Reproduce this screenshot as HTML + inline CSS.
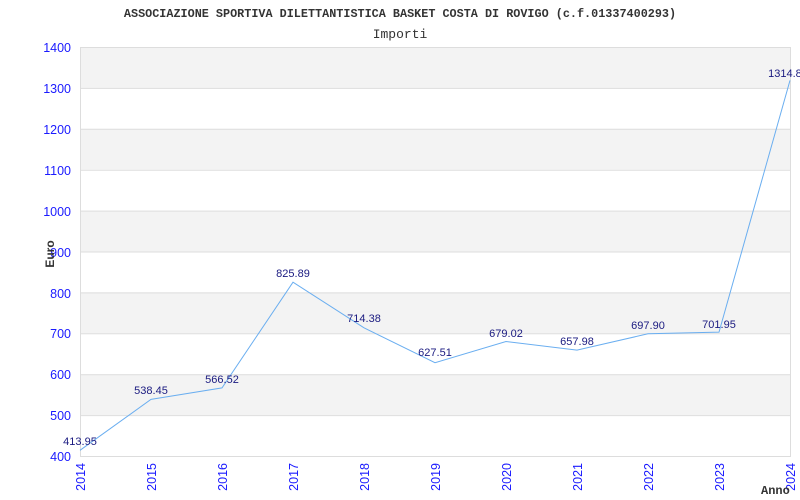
<!DOCTYPE html>
<html><head><meta charset="utf-8"><style>html,body{margin:0;padding:0;background:#fff}svg{display:block}</style></head><body>
<svg width="800" height="500" xmlns="http://www.w3.org/2000/svg">
<rect width="800" height="500" fill="#fff"/>
<text x="400" y="17" text-anchor="middle" font-family="Liberation Mono, monospace" font-weight="bold" font-size="11.8" fill="#333">ASSOCIAZIONE SPORTIVA DILETTANTISTICA BASKET COSTA DI ROVIGO (c.f.01337400293)</text>
<text x="400" y="38" text-anchor="middle" font-family="Liberation Mono, monospace" font-size="13" fill="#333">Importi</text>
<g fill="#f3f3f3">
<rect x="80" y="47" width="710" height="40.9"/>
<rect x="80" y="128.8" width="710" height="40.9"/>
<rect x="80" y="210.6" width="710" height="40.9"/>
<rect x="80" y="292.4" width="710" height="40.9"/>
<rect x="80" y="374.2" width="710" height="40.9"/>
</g>
<g stroke="#ddd" stroke-width="1">
<line x1="80" y1="47.5" x2="790" y2="47.5"/>
<line x1="80" y1="88.4" x2="790" y2="88.4"/>
<line x1="80" y1="129.3" x2="790" y2="129.3"/>
<line x1="80" y1="170.2" x2="790" y2="170.2"/>
<line x1="80" y1="211.1" x2="790" y2="211.1"/>
<line x1="80" y1="252" x2="790" y2="252"/>
<line x1="80" y1="292.9" x2="790" y2="292.9"/>
<line x1="80" y1="333.8" x2="790" y2="333.8"/>
<line x1="80" y1="374.7" x2="790" y2="374.7"/>
<line x1="80" y1="415.6" x2="790" y2="415.6"/>
<line x1="80" y1="456.5" x2="790" y2="456.5"/>
<line x1="80.5" y1="47" x2="80.5" y2="457"/>
<line x1="790.5" y1="47" x2="790.5" y2="457"/>
</g>
<g font-family="Liberation Sans, sans-serif" font-size="12.5" fill="#1a1aff" text-anchor="end">
<text x="71" y="52">1400</text><text x="71" y="93">1300</text><text x="71" y="134">1200</text><text x="71" y="175">1100</text><text x="71" y="216">1000</text><text x="71" y="257">900</text><text x="71" y="298">800</text><text x="71" y="338">700</text><text x="71" y="379">600</text><text x="71" y="420">500</text><text x="71" y="461">400</text>
</g>
<g font-family="Liberation Sans, sans-serif" font-size="12.5" fill="#1a1aff" text-anchor="end">
<text transform="translate(85,463) rotate(-90)">2014</text>
<text transform="translate(156,463) rotate(-90)">2015</text>
<text transform="translate(227,463) rotate(-90)">2016</text>
<text transform="translate(298,463) rotate(-90)">2017</text>
<text transform="translate(369,463) rotate(-90)">2018</text>
<text transform="translate(440,463) rotate(-90)">2019</text>
<text transform="translate(511,463) rotate(-90)">2020</text>
<text transform="translate(582,463) rotate(-90)">2021</text>
<text transform="translate(653,463) rotate(-90)">2022</text>
<text transform="translate(724,463) rotate(-90)">2023</text>
<text transform="translate(795,463) rotate(-90)">2024</text>
</g>
<text transform="translate(54,254) rotate(-90)" text-anchor="middle" font-family="Liberation Sans, sans-serif" font-weight="bold" font-size="12" fill="#333">Euro</text>
<text x="761" y="494" font-family="Liberation Mono, monospace" font-weight="bold" font-size="12" fill="#333">Anno</text>
<polyline fill="none" stroke="#6aaef0" stroke-width="1" points="80,450.3 151,399.4 222,387.9 293,282.2 364,327.8 435,362.7 506,341.5 577,350.1 648,333.8 719,332.1 790,80.4"/>
<g font-family="Liberation Sans, sans-serif" font-size="11" fill="#1a1a80" text-anchor="middle">
<text x="80" y="445">413.95</text>
<text x="151" y="394">538.45</text>
<text x="222" y="383">566.52</text>
<text x="293" y="277">825.89</text>
<text x="364" y="322">714.38</text>
<text x="435" y="356">627.51</text>
<text x="506" y="337">679.02</text>
<text x="577" y="345">657.98</text>
<text x="648" y="329">697.90</text>
<text x="719" y="328">701.95</text>
<text x="788" y="77">1314.85</text>
</g>
</svg>
</body></html>
